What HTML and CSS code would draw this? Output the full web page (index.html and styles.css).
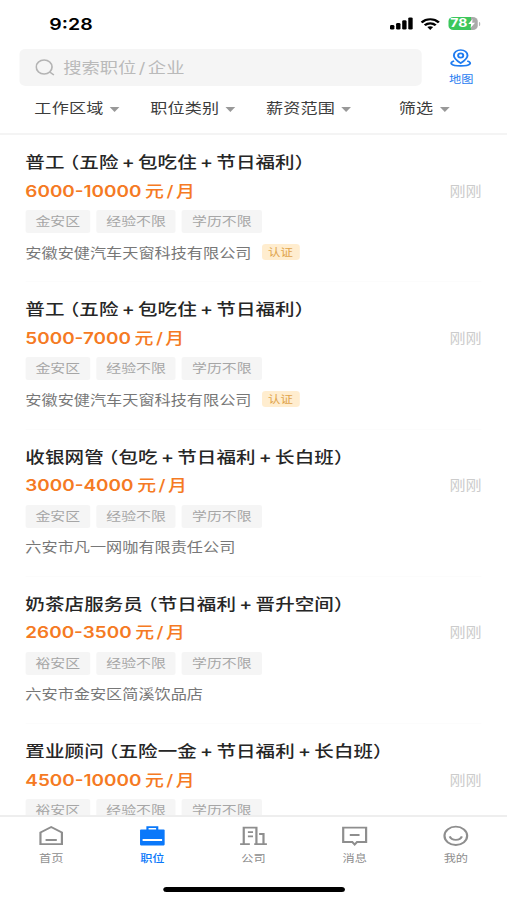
FILE: index.html
```html
<!DOCTYPE html>
<html lang="zh-CN">
<head>
    <meta charset="UTF-8">
    <meta name="viewport" content="width=device-width, initial-scale=1.0">
    <title>职位</title>
    <link rel="stylesheet" href="styles.css">
</head>
<body>
    <div class="screen">
        <!-- Status bar -->
        <div class="status-bar">
            <span class="status-time">9:28</span>
            <div class="status-icons">
                <svg class="icon-signal" width="19" height="13" viewBox="0 0 19 13">
                    <rect x="0" y="8" width="3.6" height="4.5" rx="1.2"/>
                    <rect x="5" y="6" width="3.6" height="6.5" rx="1.2"/>
                    <rect x="10" y="3.2" width="3.6" height="9.3" rx="1.2"/>
                    <rect x="15" y="0.4" width="3.6" height="12.1" rx="1.2"/>
                </svg>
                <svg class="icon-wifi" width="16" height="12" viewBox="0 0 16 12" fill="none" stroke="#000" stroke-width="2.2">
                    <path d="M0.9 4.4C4.9 0.2 11.1 0.2 15.1 4.4"/>
                    <path d="M3.5 7.3C6.1 4.7 9.9 4.7 12.5 7.3"/>
                    <path d="M5.6 9.1C7 7.9 9 7.9 10.4 9.1L8 11.9Z" fill="#000" stroke="none"/>
                </svg>
                <div class="battery">
                    <span class="battery-text">78</span>
                    <svg width="6" height="9" viewBox="0 0 6 9"><path d="M3.8 0L0.2 5H2.6L2 9L5.8 3.8H3.4Z" fill="#fff"/></svg>
                </div>
                <span class="battery-cap"></span>
            </div>
        </div>

        <!-- Search -->
        <div class="search-row">
            <div class="search-box">
                <svg width="16" height="18" viewBox="0 0 16 18" fill="none" stroke="#b4b4b4" stroke-width="1.4">
                    <ellipse cx="7.2" cy="8" rx="6.5" ry="7"/>
                    <path d="M11.8 13L15.2 16"/>
                </svg>
                <span class="search-placeholder">搜索职位<i>/</i>企业</span>
            </div>
            <div class="map-link">
                <svg width="18" height="18" viewBox="0 0 18 18" fill="none" stroke="#1f7cf0" stroke-width="1.6">
                    <path d="M9 14.2C5.6 11.4 3.4 9.3 3.4 6.4C3.4 3.2 5.9 1 9 1S14.6 3.2 14.6 6.4C14.6 9.3 12.4 11.4 9 14.2Z"/>
                    <circle cx="9" cy="6.5" r="2.1"/>
                    <path d="M3.6 11.9C-0.6 13.6 0.4 16.9 9 16.9S18.6 13.6 14.4 11.9"/>
                </svg>
                <span>地图</span>
            </div>
        </div>

        <!-- Filters -->
        <div class="filters">
            <div class="filter">工作区域<span class="arrow"></span></div>
            <div class="filter">职位类别<span class="arrow"></span></div>
            <div class="filter">薪资范围<span class="arrow"></span></div>
            <div class="filter">筛选<span class="arrow"></span></div>
        </div>

        <!-- Job list -->
        <div class="job-list">
            <div class="job">
                <h2 class="job-title">普工<span class="paren">（</span>五险<i>+</i>包吃住<i>+</i>节日福利）</h2>
                <div class="job-pay">
                    <span class="pay"><b>6000-10000</b><span>元</span><i>/</i><span>月</span></span>
                    <span class="time">刚刚</span>
                </div>
                <div class="tags">
                    <span class="tag">金安区</span>
                    <span class="tag">经验不限</span>
                    <span class="tag">学历不限</span>
                </div>
                <div class="company">安徽安健汽车天窗科技有限公司<span class="badge">认证</span></div>
            </div>

            <div class="job">
                <h2 class="job-title">普工<span class="paren">（</span>五险<i>+</i>包吃住<i>+</i>节日福利）</h2>
                <div class="job-pay">
                    <span class="pay"><b>5000-7000</b><span>元</span><i>/</i><span>月</span></span>
                    <span class="time">刚刚</span>
                </div>
                <div class="tags">
                    <span class="tag">金安区</span>
                    <span class="tag">经验不限</span>
                    <span class="tag">学历不限</span>
                </div>
                <div class="company">安徽安健汽车天窗科技有限公司<span class="badge">认证</span></div>
            </div>

            <div class="job">
                <h2 class="job-title">收银网管<span class="paren">（</span>包吃<i>+</i>节日福利<i>+</i>长白班）</h2>
                <div class="job-pay">
                    <span class="pay"><b>3000-4000</b><span>元</span><i>/</i><span>月</span></span>
                    <span class="time">刚刚</span>
                </div>
                <div class="tags">
                    <span class="tag">金安区</span>
                    <span class="tag">经验不限</span>
                    <span class="tag">学历不限</span>
                </div>
                <div class="company">六安市凡一网咖有限责任公司</div>
            </div>

            <div class="job">
                <h2 class="job-title">奶茶店服务员<span class="paren">（</span>节日福利<i>+</i>晋升空间）</h2>
                <div class="job-pay">
                    <span class="pay"><b>2600-3500</b><span>元</span><i>/</i><span>月</span></span>
                    <span class="time">刚刚</span>
                </div>
                <div class="tags">
                    <span class="tag">裕安区</span>
                    <span class="tag">经验不限</span>
                    <span class="tag">学历不限</span>
                </div>
                <div class="company">六安市金安区简溪饮品店</div>
            </div>

            <div class="job">
                <h2 class="job-title">置业顾问<span class="paren">（</span>五险一金<i>+</i>节日福利<i>+</i>长白班）</h2>
                <div class="job-pay">
                    <span class="pay"><b>4500-10000</b><span>元</span><i>/</i><span>月</span></span>
                    <span class="time">刚刚</span>
                </div>
                <div class="tags">
                    <span class="tag">裕安区</span>
                    <span class="tag">经验不限</span>
                    <span class="tag">学历不限</span>
                </div>
            </div>
        </div>

        <!-- Tab bar -->
        <div class="tab-bar">
            <div class="tabs">
                <div class="tab">
                    <svg width="20" height="22" viewBox="0 0 20 22" fill="none" stroke="#8e8e8e" stroke-width="1.8">
                        <path d="M1.2 7.4L10 2L18.8 7.4V19.2H1.2Z"/>
                        <path d="M5.4 15H14.6"/>
                    </svg>
                    <span>首页</span>
                </div>
                <div class="tab active">
                    <svg width="22" height="22" viewBox="0 0 22 22">
                        <path d="M7 5V2.2H15V5" fill="none" stroke="#0a78fa" stroke-width="1.8"/>
                        <rect x="0.9" y="4.6" width="20.2" height="15.8" rx="0.8" fill="#0a78fa"/>
                        <rect x="3" y="14" width="16" height="2" fill="#fff"/>
                    </svg>
                    <span>职位</span>
                </div>
                <div class="tab">
                    <svg width="22" height="22" viewBox="0 0 22 22" fill="none" stroke="#8e8e8e" stroke-width="1.8">
                        <path d="M0 19.2H8M3 19.2V2.6H13.4V19.2M11.6 19.2H22M19.2 19.2V9H15.6"/>
                        <path d="M6.4 7.2H10.6M6.4 11.4H10.6"/>
                    </svg>
                    <span>公司</span>
                </div>
                <div class="tab">
                    <svg width="22" height="22" viewBox="0 0 22 22" fill="none" stroke="#8e8e8e" stroke-width="1.8">
                        <path d="M1.6 2.6H20.4V17H13L11 19.6L9 17H1.6Z"/>
                        <path d="M7 10H15"/>
                    </svg>
                    <span>消息</span>
                </div>
                <div class="tab">
                    <svg width="22" height="22" viewBox="0 0 22 22" fill="none" stroke="#8e8e8e" stroke-width="1.8">
                        <ellipse cx="11" cy="10.8" rx="9.3" ry="9.2"/>
                        <path d="M6 11.4C7.6 16 14.4 16 16 11.4"/>
                    </svg>
                    <span>我的</span>
                </div>
            </div>
            <div class="home-indicator"></div>
        </div>
    </div>
</body>
</html>
```

FILE: styles.css
```css
:root {
    --primary-color: #0a78fa;
    --price-color: #f57a23;
    --title-color: #262626;
    --muted-color: #a6a6a6;
    --chip-color: #f5f5f5;
}

* {
    margin: 0;
    padding: 0;
    box-sizing: border-box;
}

body {
    width: 507px;
    height: 900px;
    overflow: hidden;
    background: #fff;
    font-family: Inter, "Noto Sans CJK SC", sans-serif;
}

i {
    font-style: normal;
}

/* 416px wide layout stretched over the full 507px window */
.screen {
    display: flex;
    flex-direction: column;
    width: 416px;
    height: 900px;
    overflow: hidden;
    transform: scaleX(1.21875);
    transform-origin: 0 0;
}

/* Status bar */
.status-bar {
    display: flex;
    flex: none;
    justify-content: space-between;
    align-items: center;
    height: 49px;
    padding: 0 22px 2px 40.5px;
}

.status-time {
    font-size: 16px;
    font-weight: 600;
    color: #000;
}

.status-icons {
    display: flex;
    align-items: center;
}

.icon-wifi {
    margin: 0 7px 0 6px;
}

.battery {
    display: flex;
    justify-content: center;
    align-items: center;
    width: 24px;
    height: 13px;
    border-radius: 4px;
    background: linear-gradient(90deg, #3cc75c 78%, #aaa 78%);
}

.battery-text {
    font-size: 11.5px;
    font-weight: 700;
    line-height: 13px;
    color: #fff;
}

.battery-cap {
    width: 1.5px;
    height: 4px;
    margin-left: 1px;
    border-radius: 0 2px 2px 0;
    background: #b5b5b5;
}

/* Search */
.search-row {
    display: flex;
    flex: none;
    height: 37px;
    padding-left: 16.4px;
}

.search-box {
    display: flex;
    align-items: center;
    width: 330px;
    height: 37px;
    padding-left: 12.5px;
    border-radius: 5px;
    background: var(--chip-color);
}

.search-placeholder {
    margin-left: 7px;
    font-size: 15px;
    line-height: 20px;
    color: #bababa;
}

.search-placeholder i {
    margin: 0 2px;
}

.map-link {
    display: flex;
    flex-direction: column;
    align-items: center;
    width: 64px;
}

.map-link span {
    margin-top: 4.5px;
    font-size: 10px;
    line-height: 14px;
    color: #1f7cf0;
}

/* Filters */
.filters {
    display: flex;
    flex: none;
    height: 49px;
    padding: 12px 0 0 28.2px;
    border-bottom: 2px solid #f4f4f4;
}

.filter {
    display: flex;
    flex: none;
    width: 95px;
    font-size: 14px;
    line-height: 20px;
    letter-spacing: 0.2px;
    color: #3c3c3c;
}

.filter:nth-child(3) {
    width: 109px;
}

.filter:last-child {
    width: auto;
}

.arrow {
    width: 0;
    height: 0;
    margin: 8.5px 0 0 5px;
    border: 4.5px solid transparent;
    border-top: 5px solid #999;
    border-bottom: 0;
}

/* Job list */
.job-list {
    flex: 1;
    min-height: 0;
    overflow: hidden;
    padding: 0 20.8px;
}

.job {
    height: 147.25px;
    padding-top: 15px;
    border-bottom: 1px solid #fcfcfc;
}

.job-title {
    font-size: 16px;
    font-weight: 500;
    line-height: 24px;
    letter-spacing: 0.08px;
    white-space: nowrap;
    color: var(--title-color);
}

.job-title i {
    display: inline-block;
    width: 16px;
    text-align: center;
}

.paren {
    padding-left: 4px;
    font-feature-settings: "halt";
}

.job-pay {
    display: flex;
    justify-content: space-between;
    align-items: center;
    height: 24px;
    margin-top: 4px;
}

.pay {
    padding-top: 3px;
    font-size: 15.5px;
    font-weight: 500;
    line-height: 24px;
    color: var(--price-color);
}

.pay b {
    margin-right: 3px;
    font-weight: 600;
}

.pay i {
    margin: 0 2px;
}

.time {
    font-size: 13.2px;
    color: #ccc;
}

.tags {
    display: flex;
    gap: 5px;
    margin-top: 8px;
}

.tag {
    height: 23px;
    padding: 0 8.3px;
    border-radius: 2px;
    background: var(--chip-color);
    font-size: 12.2px;
    line-height: 23px;
    color: var(--muted-color);
}

.company {
    display: flex;
    align-items: center;
    height: 20px;
    margin-top: 9px;
    font-size: 13.25px;
    color: #777;
}

.badge {
    width: 31px;
    height: 16px;
    margin-left: 8.3px;
    border-radius: 3px;
    background: #ffedcf;
    font-size: 10.2px;
    line-height: 16px;
    text-align: center;
    color: #e0a44c;
}

/* Tab bar */
.tab-bar {
    flex: none;
    height: 85px;
    border-top: 2px solid #eee;
    background: #fff;
}

.tabs {
    display: flex;
    padding: 8px 0.5px 0;
}

.tab {
    display: flex;
    flex: 1;
    flex-direction: column;
    align-items: center;
    font-size: 10px;
    line-height: 14px;
    color: #8e8e8e;
}

.tab span {
    margin-top: 4px;
}

.tab.active {
    font-weight: 500;
    color: var(--primary-color);
}

.home-indicator {
    width: 149px;
    height: 5px;
    margin: 22px auto 0;
    border-radius: 3px;
    background: #000;
}
```
